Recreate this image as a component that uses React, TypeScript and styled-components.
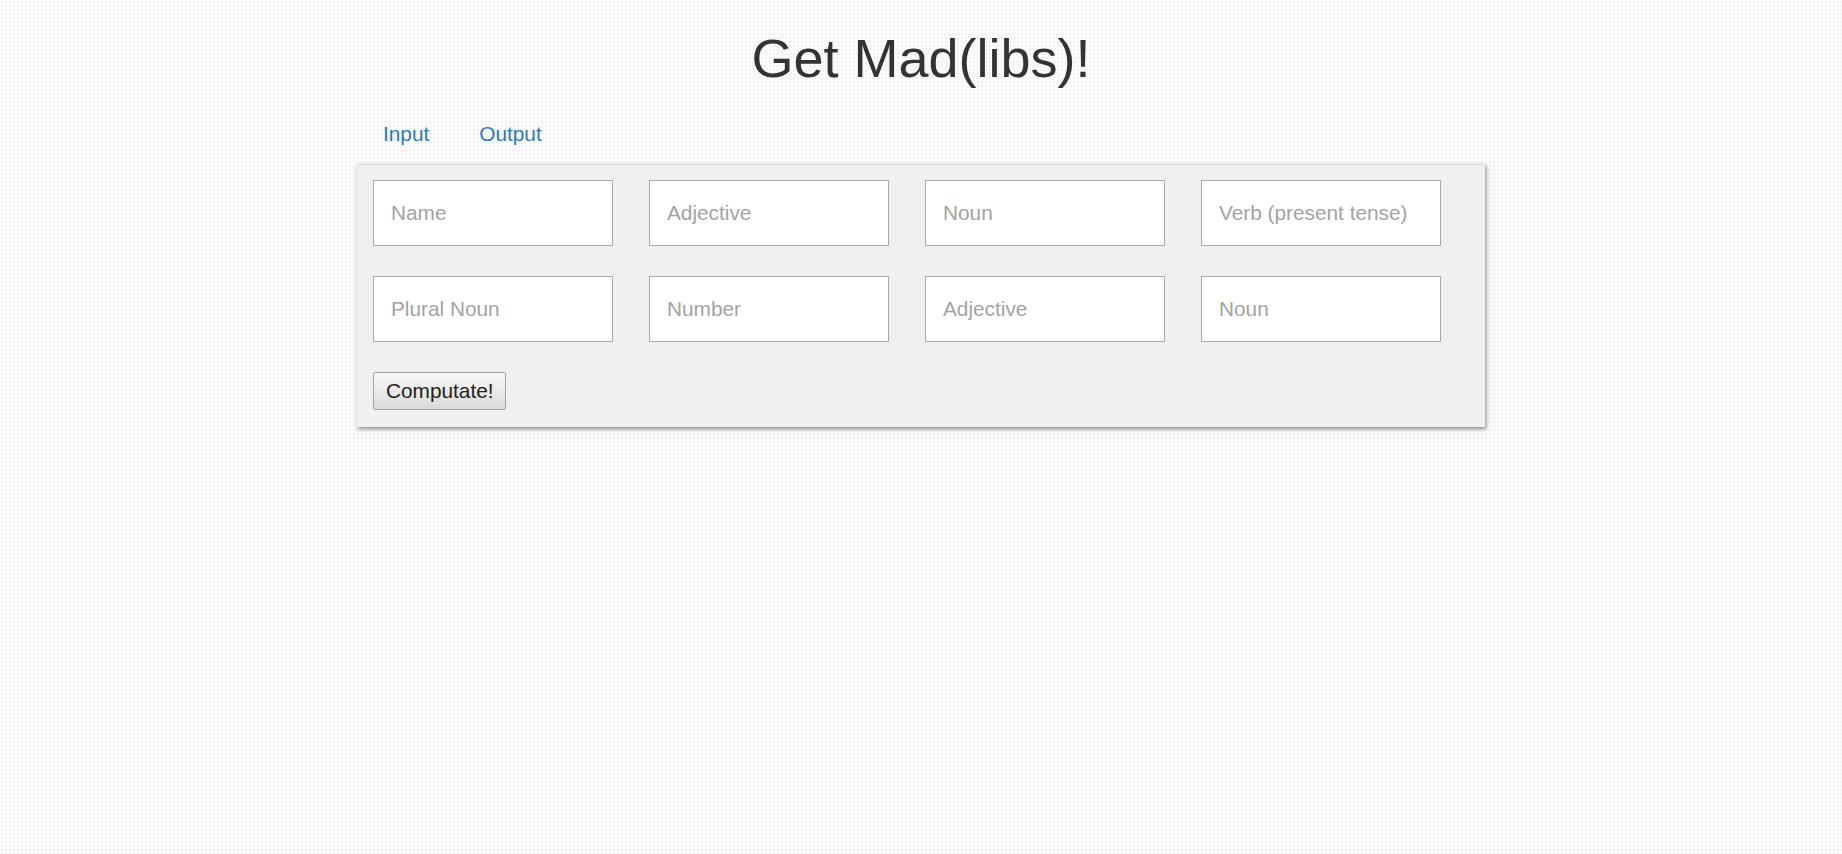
import { useState } from "react";
import styled, { createGlobalStyle } from "styled-components";

const GlobalStyle = createGlobalStyle`
  html, body {
    margin: 0;
    padding: 0;
    min-height: 100%;
  }

  body {
    min-height: 100vh;
    font-family: "Liberation Sans", Arial, sans-serif;
    color: #333;
    background-color: #fafafa;
    background-image: radial-gradient(#f0f0f0 1px, transparent 1.2px);
    background-size: 4px 4px;
  }
`;

const Page = styled.div`
  display: flex;
  flex-direction: column;
  align-items: center;
`;

const Title = styled.h1`
  margin: 28px 0 0;
  font-size: 54px;
  font-weight: 400;
  line-height: 61px;
  color: #333;
`;

const Main = styled.div`
  width: 1128px;
`;

const TabBar = styled.nav`
  display: flex;
  gap: 50px;
  margin: 33px 0 19px;
  padding: 0 26px;
`;

const TabLink = styled.a<{ $active?: boolean }>`
  font-size: 20.8px;
  line-height: 23px;
  color: #337ab7;
  text-decoration: none;
  cursor: pointer;

  &:hover {
    text-decoration: underline;
  }
`;

const Panel = styled.form`
  background: #f0f0f0;
  border-top: 1px solid #dcdcdc;
  box-shadow: 1px 2px 4px rgba(0, 0, 0, 0.45);
  padding: 15px 16px 17px;
`;

const FieldGrid = styled.div`
  display: grid;
  grid-template-columns: repeat(4, 240px);
  column-gap: 36px;
  row-gap: 30px;
`;

const WordInput = styled.input`
  box-sizing: border-box;
  width: 240px;
  height: 66px;
  margin: 0;
  padding: 0 17px;
  border: 1px solid #a9a9a9;
  background: #fff;
  font-family: "Liberation Sans", Arial, sans-serif;
  font-size: 20.8px;
  color: #333;
  outline: none;

  &::placeholder {
    color: #a3a3a3;
  }

  &:focus {
    border-color: #66afe9;
  }
`;

const ComputeButton = styled.button`
  box-sizing: border-box;
  display: block;
  width: 133px;
  height: 38px;
  margin-top: 30px;
  padding: 0 12px;
  border: 1px solid #a3a3a3;
  border-radius: 2px;
  background: linear-gradient(to bottom, #f8f8f8, #dadada);
  font-family: "Liberation Sans", Arial, sans-serif;
  font-size: 20.8px;
  color: #222;
  cursor: pointer;
`;

const fields = [
  "Name",
  "Adjective",
  "Noun",
  "Verb (present tense)",
  "Plural Noun",
  "Number",
  "Adjective",
  "Noun",
];

export default function App() {
  const [tab, setTab] = useState<"input" | "output">("input");
  const [values, setValues] = useState<string[]>(fields.map(() => ""));

  return (
    <>
      <GlobalStyle />
      <Page>
        <Title>Get Mad(libs)!</Title>
        <Main>
          <TabBar>
            <TabLink $active={tab === "input"} onClick={() => setTab("input")}>
              Input
            </TabLink>
            <TabLink $active={tab === "output"} onClick={() => setTab("output")}>
              Output
            </TabLink>
          </TabBar>
          <Panel onSubmit={(e) => e.preventDefault()}>
            <FieldGrid>
              {fields.map((label, i) => (
                <WordInput
                  key={i}
                  type="text"
                  placeholder={label}
                  value={values[i]}
                  onChange={(e) => {
                    const next = [...values];
                    next[i] = e.target.value;
                    setValues(next);
                  }}
                />
              ))}
            </FieldGrid>
            <ComputeButton type="submit">Computate!</ComputeButton>
          </Panel>
        </Main>
      </Page>
    </>
  );
}
